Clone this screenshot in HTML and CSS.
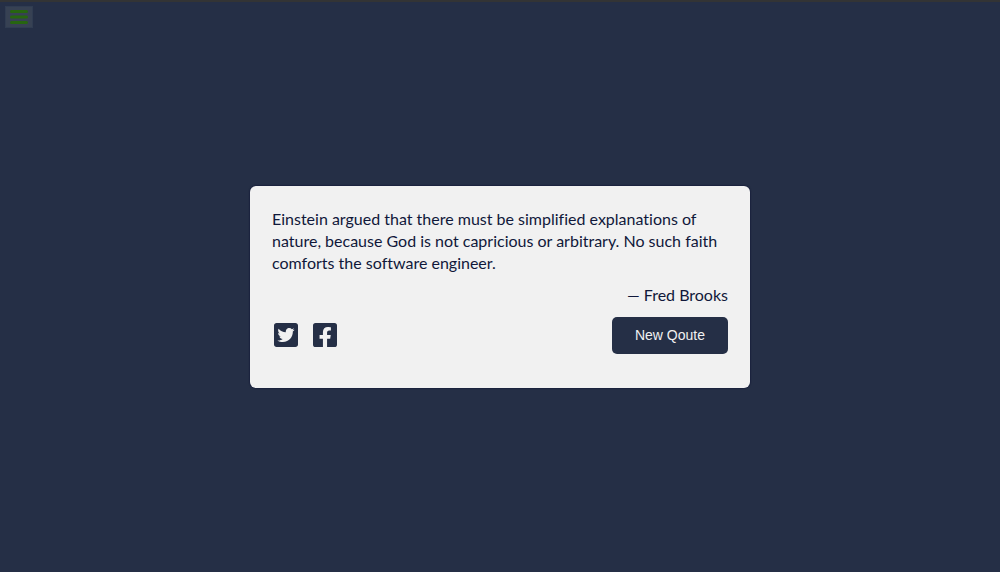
FILE: index.html
```html
<!DOCTYPE html>
<html lang="en">
<head>
<meta charset="utf-8">
<meta name="viewport" content="width=device-width, initial-scale=1">
<title>Quotes</title>
<link rel="stylesheet" href="styles.css">
</head>
<body>
<button class="menu" type="button" aria-label="Menu">
  <svg class="menu-icon" viewBox="0 0 18 14" aria-hidden="true"><path d="M1.500 1.500h15M1.500 7h15M1.500 12.500h15" stroke="currentColor" stroke-width="3" stroke-linecap="round"/></svg>
</button>
<main class="page">
  <section class="card">
    <blockquote class="quote">Einstein argued that there must be simplified explanations of nature, because God is not capricious or arbitrary. No such faith comforts the software engineer.</blockquote>
    <p class="author">— Fred Brooks</p>
    <div class="actions">
      <div class="share">
        <a class="share-link" href="#" aria-label="Share on Twitter"><svg class="share-icon" viewBox="0 0 448 512" aria-hidden="true"><path fill="currentColor" d="M400 32H48C21.500 32 0 53.500 0 80v352c0 26.500 21.500 48 48 48h352c26.500 0 48-21.500 48-48V80c0-26.500-21.500-48-48-48zm-48.900 158.800c.2 2.800.2 5.700.2 8.500 0 86.700-66 186.600-186.600 186.600-37.200 0-71.700-10.800-100.700-29.400 5.300.6 10.400.8 15.800.8 30.700 0 58.900-10.400 81.400-28-28.800-.6-53-19.500-61.300-45.500 10.100 1.500 19.200 1.500 29.600-1.200-30-6.100-52.500-32.500-52.500-64.400v-.8c8.700 4.900 18.900 7.900 29.600 8.300a65.447 65.447 0 0 1-29.200-54.600c0-12.200 3.200-23.400 8.900-33.100 32.300 39.800 80.800 65.800 135.200 68.600-9.300-44.500 24-80.600 64-80.600 18.900 0 35.900 7.900 47.900 20.700 14.800-2.800 29-8.300 41.600-15.800-4.900 15.200-15.200 28-28.800 36.100 13.200-1.400 26-5.100 37.800-10.200-8.900 13.100-20.100 24.700-32.900 34z"/></svg></a>
        <a class="share-link" href="#" aria-label="Share on Facebook"><svg class="share-icon" viewBox="0 0 448 512" aria-hidden="true"><path fill="currentColor" d="M400 32H48A48 48 0 0 0 0 80v352a48 48 0 0 0 48 48h137.250V327.690h-63V256h63v-54.640c0-62.150 37-96.480 93.670-96.480 27.140 0 55.520 4.840 55.520 4.840v61h-31.270c-30.810 0-40.420 19.120-40.420 38.730V256h68.780l-11 71.690h-57.780V480H400a48 48 0 0 0 48-48V80a48 48 0 0 0-48-48z"/></svg></a>
      </div>
      <button class="new-quote" type="button">New Qoute</button>
    </div>
  </section>
</main>
</body>
</html>
```
FILE: styles.css
```css
* {
  box-sizing: border-box;
}

body {
  margin: 0;
  min-height: 100vh;
  display: flex;
  flex-direction: column;
  background: #252f46;
  color: #10183a;
  font-family: Lato, sans-serif;
  font-size: 16px;
  line-height: 22px;
  font-variant-ligatures: none;
  border-top: 2px solid #333435;
}

.menu {
  position: absolute;
  top: 6px;
  left: 5px;
  display: flex;
  padding: 3px 4px;
  border: 1px solid #303c51;
  background: #374153;
  color: #276510;
}

.menu-icon {
  width: 18px;
  height: 14px;
}

.page {
  flex: 1;
  display: flex;
  align-items: center;
  justify-content: center;
}

.card {
  width: 50%;
  min-width: 300px;
  padding: 22px 22px 34px;
  border-radius: 6px;
  background: #f1f1f1;
  box-shadow: 0 0 2px #00052a;
}

.quote {
  margin: 0 0 10px;
}

.author {
  margin: 0 0 11px;
  text-align: right;
}

.actions {
  display: flex;
  align-items: center;
  justify-content: space-between;
}

.share {
  display: flex;
  gap: 15px;
  padding: 0 2px 2px;
}

.share-link {
  display: flex;
  color: #252f46;
}

.share-icon {
  width: 24px;
  height: 28px;
}

.new-quote {
  padding: 8px 23px;
  border: 0;
  border-radius: 5px;
  background: #252f46;
  color: #f1f1f1;
  font-family: "Liberation Sans", Arial, sans-serif;
  font-size: 14px;
  line-height: 21px;
}
```
